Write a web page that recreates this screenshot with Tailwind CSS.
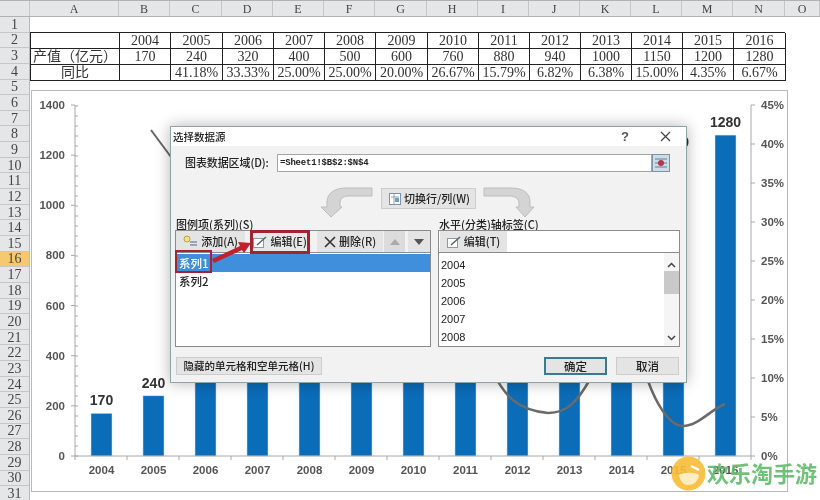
<!DOCTYPE html>
<html lang="zh">
<head>
    <meta charset="UTF-8">
    <title>选择数据源</title>
    <script src="https://cdn.jsdelivr.net/npm/@tailwindcss/browser@4"></script>
</head>
<body class="bg-white">
<div class="relative w-[820px] h-[500px] overflow-hidden bg-white blur-[0.4px] font-['Liberation_Serif','Noto_Sans_CJK_SC',serif] text-[#222]">

    <!-- column headers -->
    <div id="col-head" class="flex h-[17px] bg-[#e4e6e8] border-t border-b border-[#b0b2b4] text-[12px] text-[#444]"></div>

    <!-- rows + cells -->
    <div class="flex">
        <div id="row-head" class="w-[30px] shrink-0 flex flex-col bg-[#e4e6e8] border-r border-[#b8babc] text-[14px] text-[#444]"></div>
        <div class="flex-1 pt-[15px]">
            <div id="sheet-table" class="grid grid-cols-[89px_51px_52px_51px_51px_51px_52px_51px_51px_51px_51px_51px_51px_52px] w-[755px] border-t border-l border-[#222] text-[14px] text-[#333]"></div>
        </div>
    </div>

    <!-- chart object -->
    <div class="absolute left-[31px] top-[90px] w-[757px] h-[402px] bg-white border border-[#b9b9b9]"></div>
    <svg id="chart" class="absolute left-0 top-0" width="820" height="500" font-family="Liberation Sans" fill="#555">
        <path d="M151,130 L171,157" fill="none" stroke="#666" stroke-width="2"/>
        <g id="bars"></g>
        <path d="M497,380 C505,393 515,410 548,413 C568,413 578,400 589,381 M648,381 C655,400 668,426 683,426 C698,426 710,410 725,404" fill="none" stroke="#6a6a6a" stroke-width="2.5"/>
        <path d="M75,105 V456 H751 V105" fill="none" stroke="#a8a8a8"/>
        <g id="ticks" stroke="#a8a8a8"></g>
        <g id="labels" font-size="12" font-weight="700"></g>
    </svg>

    <!-- dialog -->
    <div class="absolute left-[170px] top-[126px] w-[517px] h-[257px] bg-[#f2f2f2] border border-[#8fa6a8] shadow-[0_0_14px_rgba(0,0,0,0.3)] text-[11px] font-medium text-[#222] font-['Noto_Sans_CJK_SC',sans-serif]">
        <div class="flex items-center h-[19px] bg-white pl-[2px] text-[10.5px]">
            <span>选择数据源</span>
            <span class="ml-auto mr-[31px] text-[13px] font-bold text-[#555] font-['Liberation_Sans']">?</span>
            <svg class="mr-[15px]" width="11" height="11" viewBox="0 0 11 11"><path d="M1,1 L10,10 M10,1 L1,10" stroke="#444" stroke-width="1.2"/></svg>
        </div>
        <div class="flex items-center h-[26px] pt-[7px] pl-[14px]">
            <span class="w-[92px] tracking-[-0.1px]">图表数据区域(D):</span>
            <div class="w-[375px] h-[18px] bg-white border border-[#a5a5a5] pl-[2px] leading-[16px] text-[9px] font-bold tracking-[-0.2px] font-['Liberation_Mono',monospace]">=Sheet1!$B$2:$N$4</div>
            <svg width="18" height="18" viewBox="0 0 18 18"><rect x="0.5" y="0.5" width="17" height="17" fill="#cfdbe6" stroke="#7b93a8"/><path d="M3,5 H15 M3,9 H15 M3,13 H15" stroke="#5f7f9a"/><circle cx="9" cy="9" r="3" fill="#b8344a"/></svg>
        </div>
        <div class="relative h-[45px]">
            <div class="absolute left-[210px] top-[16px] w-[95px] h-[21px] flex items-center gap-[3px] pl-[7px] bg-[#e4e4e4] border border-[#cdcdcd] text-[11px] whitespace-nowrap">
                <svg width="12" height="12" viewBox="0 0 12 12"><rect x="0.5" y="0.5" width="11" height="11" fill="#fff" stroke="#7f93a5"/><path d="M2,4 H10 M5,1 V11" stroke="#8aa0b2"/><rect x="6" y="5" width="4" height="4" fill="#6fa0c8"/></svg>
                <span>切换行/列(W)</span>
            </div>
            <svg class="absolute left-[150px] top-[15px]" width="52" height="32" viewBox="0 0 52 32"><path d="M51,1 V9 H28 C21,9 19,12 19,17 V20 H21 L10,30 L0,20 H6 V15 C6,6 14,1 25,1 Z" fill="#d4d4d4" stroke="#bdbdbd"/></svg>
            <svg class="absolute left-[312px] top-[15px]" width="52" height="32" viewBox="0 0 52 32"><path d="M1,1 V9 H26 C33,9 36,12 36,17 V20 H33 L42,30 L51,20 H47 V15 C47,6 40,1 28,1 Z" fill="#d4d4d4" stroke="#bdbdbd"/></svg>
        </div>
        <div class="flex h-[14px] items-center text-[11px] leading-none pt-[1px]">
            <span class="ml-[5px] w-[263px]">图例项(系列)(S)</span>
            <span>水平(分类)轴标签(C)</span>
        </div>
        <div class="flex mt-[-1px] pl-[4px] gap-[7px]">
            <!-- series panel -->
            <div class="relative w-[256px] h-[117px] bg-white border border-[#8c8c8c]">
                <div class="flex items-center h-[22px] border-b border-[#8c8c8c] bg-[#f2f2f2] gap-[1px] text-[11px]">
                    <div class="flex items-center justify-center gap-[3px] w-[70px] h-full bg-[#e4e4e4]">
                        <svg width="15" height="13" viewBox="0 0 15 13"><circle cx="4" cy="4" r="3" fill="#f3e08a" stroke="#b9a04a"/><path d="M7,7 H14 M7,10 H14" stroke="#7f93a5" stroke-width="1.5"/></svg>
                        <span>添加(A)</span>
                    </div>
                    <div class="flex items-center justify-center gap-[3px] w-[60px] h-[24px] ml-[4px] bg-[#e8e8e8] border-[3px] border-[#a3232f] relative z-10">
                        <svg width="14" height="12" viewBox="0 0 14 12"><rect x="0.5" y="2.5" width="10" height="9" fill="#fff" stroke="#8a9aa8"/><path d="M4,9 L13,1" stroke="#56646f" stroke-width="1.5"/></svg>
                        <span>编辑(E)</span>
                    </div>
                    <div class="flex items-center justify-center gap-[3px] w-[67px] h-full ml-[6px] bg-[#e4e4e4]">
                        <svg width="12" height="12" viewBox="0 0 12 12"><path d="M1,1 L11,11 M11,1 L1,11" stroke="#333" stroke-width="1.6"/></svg>
                        <span>删除(R)</span>
                    </div>
                    <div class="flex items-center justify-center w-[21px] h-full bg-[#dcdcdc]"><svg width="10" height="6" viewBox="0 0 10 6"><path d="M5,0 L10,6 H0 Z" fill="#aaa"/></svg></div>
                    <div class="flex items-center justify-center w-[22px] h-full ml-[2px] bg-[#e4e4e4]"><svg width="10" height="6" viewBox="0 0 10 6"><path d="M0,0 H10 L5,6 Z" fill="#555"/></svg></div>
                </div>
                <div class="mt-[1px] h-[18px] bg-[#3f8fdc] pl-[3px] leading-[19px] text-white text-[11.5px]">系列1</div>
                <div class="h-[18px] pl-[3px] leading-[19px] text-[11.5px]">系列2</div>
                <div class="absolute left-[-1px] top-[19px] w-[37px] h-[23px] border-[2px] border-[#a3232f]"></div>
            </div>
            <!-- category panel -->
            <div class="w-[242px] h-[117px] bg-white border border-[#8c8c8c]">
                <div class="flex items-center h-[22px] border-b border-[#8c8c8c]">
                    <div class="flex items-center justify-center gap-[3px] w-[67px] h-full ml-[1px] bg-[#e4e4e4] text-[11px]">
                        <svg width="14" height="12" viewBox="0 0 14 12"><rect x="0.5" y="2.5" width="10" height="9" fill="#fff" stroke="#8a9aa8"/><path d="M4,9 L13,1" stroke="#56646f" stroke-width="1.5"/></svg>
                        <span>编辑(T)</span>
                    </div>
                </div>
                <div class="flex h-[93px]">
                    <div class="flex-1 pl-[2px] pt-[3px] text-[11px] leading-[18px] font-['Liberation_Sans']">
                        <div>2004</div><div>2005</div><div>2006</div><div>2007</div><div>2008</div>
                    </div>
                    <div class="w-[15px] flex flex-col items-center bg-[#f5f5f5]">
                        <svg class="mt-[9px]" width="9" height="6" viewBox="0 0 9 6"><path d="M1,5 L4.5,1.5 L8,5" fill="none" stroke="#444" stroke-width="1.5"/></svg>
                        <div class="mt-[3px] w-full h-[23px] bg-[#c9c9c9]"></div>
                        <svg class="mt-auto mb-[5px]" width="9" height="6" viewBox="0 0 9 6"><path d="M1,1 L4.5,4.5 L8,1" fill="none" stroke="#444" stroke-width="1.5"/></svg>
                    </div>
                </div>
            </div>
        </div>
        <div class="flex items-center h-[18px] mt-[10px] pl-[5px] text-[11.5px]">
            <div class="w-[146px] h-[18px] bg-[#e4e4e4] border border-[#cdcdcd] leading-[16px] text-center whitespace-nowrap text-[10.5px]">隐藏的单元格和空单元格(H)</div>
            <div class="ml-[222px] w-[63px] h-[18px] bg-[#e4e4e4] border-2 border-[#3b7a8c] leading-[14px] text-center">确定</div>
            <div class="ml-[9px] w-[63px] h-[18px] bg-[#e4e4e4] border border-[#cdcdcd] leading-[16px] text-center">取消</div>
        </div>
    </div>

    <svg class="absolute left-0 top-0" width="820" height="500"><path d="M212,259 L240,246 L238,242 L251,243 L244,253 L242,250 L214,263 Z" fill="#c2202c"/></svg>

    <!-- watermark -->
    <div class="absolute left-[671px] top-[456px] flex items-center">
        <svg width="35" height="35" viewBox="0 0 35 35"><circle cx="17.5" cy="17.5" r="17" fill="#f7bd3c" fill-opacity="0.92"/><path d="M8,19 C13,16 24,16 28,19 C27,26 22,29 17,29 C12,29 9,25 8,19 Z" fill="#fff4d8" fill-opacity="0.85"/><path d="M20,10 L28,14" stroke="#fff" stroke-width="2.5"/></svg>
        <span class="ml-[1px] mt-[-3px] text-[22px] leading-none font-bold text-[#62bb6a]/90 font-['Noto_Sans_CJK_SC',sans-serif]">欢乐淘手游</span>
    </div>
</div>

<script>
    // 表头
    const colHead = document.getElementById("col-head");
    const cols = [["",30],["A",89],["B",51],["C",52],["D",51],["E",51],["F",51],["G",52],["H",51],["I",51],["J",51],["K",51],["L",51],["M",51],["N",52],["O",35]];
    colHead.innerHTML = cols.map(([name, w]) => `<div class="flex items-center justify-center border-r border-[#c4c6c8]" style="width:${w}px">${name}</div>`).join("");

    const rowHead = document.getElementById("row-head");
    let rows = "";
    for (let i = 1; i <= 31; i++) {
        const active = i === 16 ? "bg-[#f6c96e]" : "";
        rows += `<div class="h-[15.65px] shrink-0 flex items-center justify-center border-b border-[#c4c6c8] ${active}">${i}</div>`;
    }
    rowHead.innerHTML = rows;

    // 数据表
    const years = [2004,2005,2006,2007,2008,2009,2010,2011,2012,2013,2014,2015,2016];
    const values = [170,240,320,400,500,600,760,880,940,1000,1150,1200,1280];
    const growth = ["","41.18%","33.33%","25.00%","25.00%","20.00%","26.67%","15.79%","6.82%","6.38%","15.00%","4.35%","6.67%"];
    const table = [["",...years],["产值（亿元）",...values],["同比",...growth]];
    document.getElementById("sheet-table").innerHTML = table.map((row, r) => row.map((cell) =>
        `<div class="flex items-center justify-center border-r border-b border-[#222] whitespace-nowrap" style="height:${r === 2 ? 15.5 : 16}px">${cell}</div>`
    ).join("")).join("");

    // 图表
    const baseY = 456, unit = 351 / 1400;
    let bars = "", ticks = "", labels = "";
    years.forEach((year, i) => {
        const cx = 101.5 + i * 52;
        const h = values[i] * unit;
        bars += `<rect x="${cx - 10.5}" y="${baseY - h}" width="21" height="${h}" fill="#0b6cb8" stroke="#bfe3f5" stroke-width="0.5"/>`;
        labels += `<text x="${cx}" y="${baseY - h - 8}" text-anchor="middle" font-size="14" fill="#333">${values[i]}</text>`;
        labels += `<text x="${cx}" y="474" text-anchor="middle" font-size="11.5">${year}</text>`;
        ticks += `<line x1="${75 + i * 52}" y1="456" x2="${75 + i * 52}" y2="460"/>`;
    });
    ticks += `<line x1="751" y1="456" x2="751" y2="460"/>`;
    for (let v = 0; v <= 1400; v += 200) {
        const y = baseY - v * unit;
        labels += `<text x="65" y="${y + 4}" text-anchor="end" font-size="11.5">${v}</text>`;
        ticks += `<line x1="71" y1="${y}" x2="75" y2="${y}"/>`;
    }
    for (let y = 456; y >= 105; y -= 10) ticks += `<line x1="75" y1="${y}" x2="78" y2="${y}"/>`;
    for (let p = 0; p <= 45; p += 5) {
        const y = baseY - p * 7.8;
        labels += `<text x="761" y="${y + 4}" font-size="11.5">${p}%</text>`;
        ticks += `<line x1="751" y1="${y}" x2="755" y2="${y}"/>`;
    }
    document.getElementById("bars").innerHTML = bars;
    document.getElementById("ticks").innerHTML = ticks;
    document.getElementById("labels").innerHTML = labels;
</script>
</body>
</html>
